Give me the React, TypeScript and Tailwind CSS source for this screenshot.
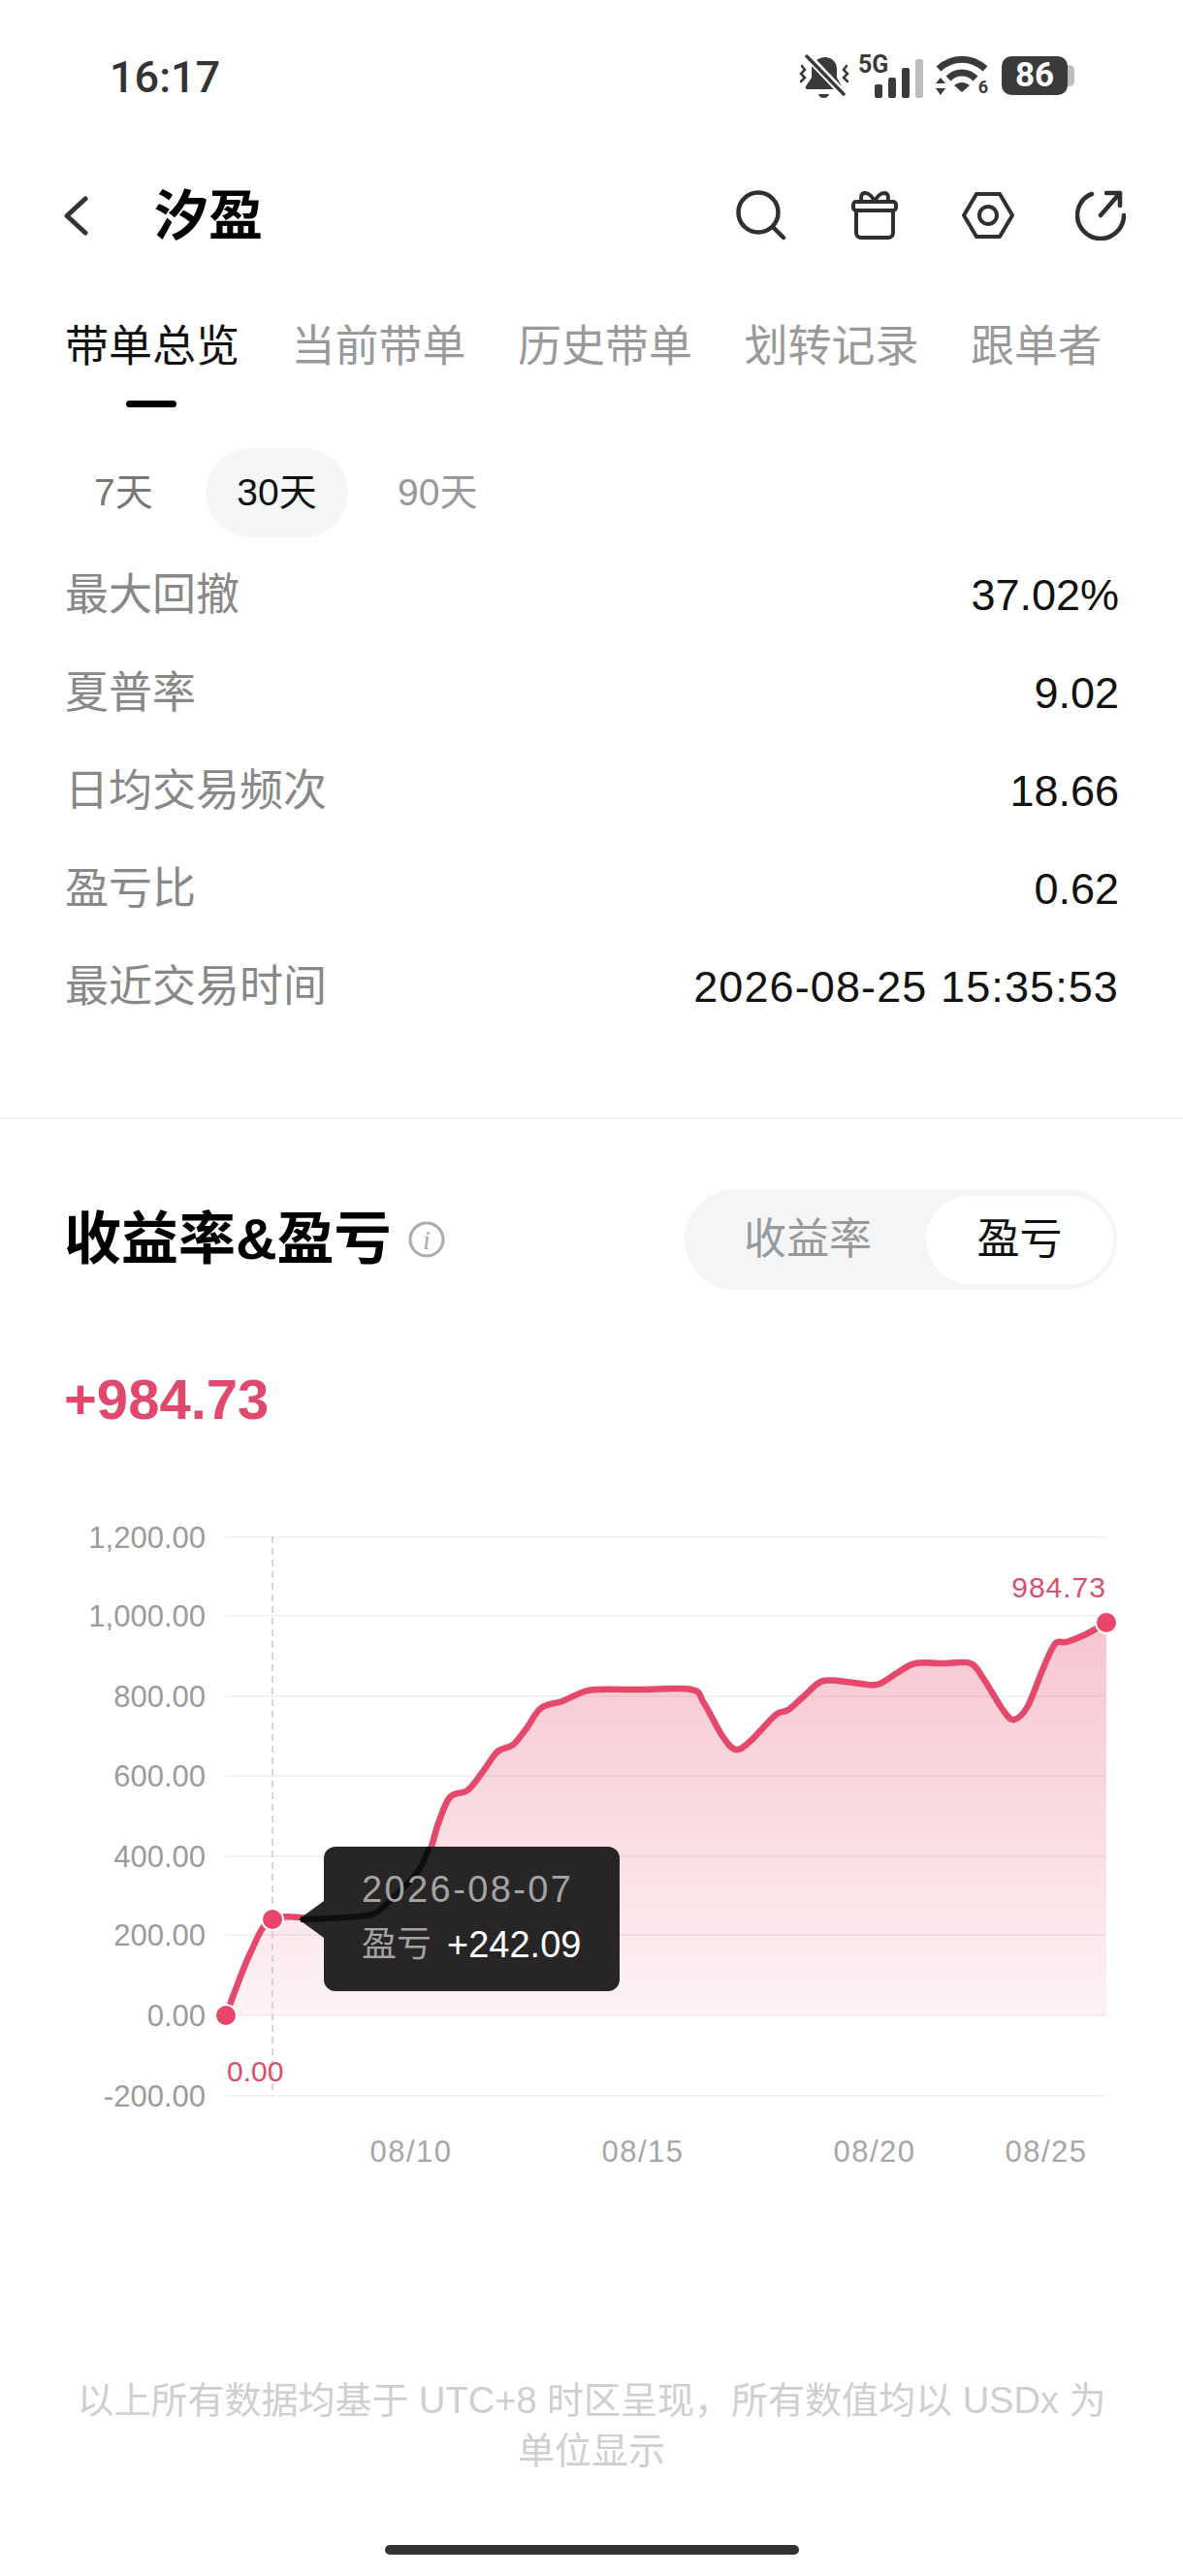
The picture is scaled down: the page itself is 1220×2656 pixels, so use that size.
import React from "react";

const TABS = ["带单总览", "当前带单", "历史带单", "划转记录", "跟单者"];

const STATS = [
  { label: "最大回撤", value: "37.02%" },
  { label: "夏普率", value: "9.02" },
  { label: "日均交易频次", value: "18.66" },
  { label: "盈亏比", value: "0.62" },
  { label: "最近交易时间", value: "2026-08-25 15:35:53" },
];

// grid lines, in page-y terms of the chart drawing
const Y_TICKS = [
  { label: "1,200.00", y: 1585 },
  { label: "1,000.00", y: 1666 },
  { label: "800.00", y: 1749 },
  { label: "600.00", y: 1831 },
  { label: "400.00", y: 1914 },
  { label: "200.00", y: 1995 },
  { label: "0.00", y: 2078 },
  { label: "-200.00", y: 2161 },
];

const X_TICKS = [
  { label: "08/10", x: 424 },
  { label: "08/15", x: 663 },
  { label: "08/20", x: 902 },
  { label: "08/25", x: 1079 },
];

const POINTS: [number, number][] = [
  [233, 2078], [258, 2014], [281, 1979], [330, 1978], [379, 1975], [405, 1957], [437, 1924],
  [452, 1880], [464, 1853], [482, 1846], [497, 1828], [513, 1806], [529, 1799], [543, 1782],
  [558, 1761], [580, 1754], [600, 1745], [615, 1742], [660, 1742], [713, 1742], [726, 1756],
  [745, 1790], [759, 1804], [774, 1795], [800, 1768], [813, 1763], [830, 1748], [849, 1733],
  [880, 1735], [904, 1737], [925, 1725], [944, 1715], [975, 1715], [1001, 1715], [1015, 1732],
  [1035, 1764], [1046, 1773], [1060, 1759], [1075, 1722], [1088, 1695], [1100, 1693],
  [1120, 1685], [1141, 1673],
];

function smoothPath(pts: [number, number][]) {
  let d = `M${pts[0][0]} ${pts[0][1]}`;
  for (let i = 0; i < pts.length - 1; i++) {
    const p0 = pts[Math.max(i - 1, 0)];
    const p1 = pts[i];
    const p2 = pts[i + 1];
    const p3 = pts[Math.min(i + 2, pts.length - 1)];
    const c1x = p1[0] + (p2[0] - p0[0]) / 6;
    const c1y = p1[1] + (p2[1] - p0[1]) / 6;
    const c2x = p2[0] - (p3[0] - p1[0]) / 6;
    const c2y = p2[1] - (p3[1] - p1[1]) / 6;
    d += ` C${c1x} ${c1y} ${c2x} ${c2y} ${p2[0]} ${p2[1]}`;
  }
  return d;
}

function BellOff() {
  return (
    <svg width="52" height="45" viewBox="0 0 52 45">
      <path d="M27 3c7 0 12 5 12 12v9l5 9c1 2 0 3-2 3H9c-2 0-3-1-2-3l6-9v-9c0-7 7-12 14-12z" fill="#3a3a3a" />
      <path d="M20 41h11c-1 3-3 4-5.500 4s-4.500-1-5.500-4z" fill="#3a3a3a" />
      <path d="M7 0l41 43" stroke="#fff" strokeWidth="8" />
      <path d="M8 2l38 39" stroke="#3a3a3a" strokeWidth="3.500" strokeLinecap="round" />
      <path d="M3 12l3 4-4 4 4 4-4 4" stroke="#3a3a3a" strokeWidth="2.500" fill="none" strokeLinecap="round" />
      <path d="M49 12l-3 4 4 4-4 4 4 4" stroke="#3a3a3a" strokeWidth="2.500" fill="none" strokeLinecap="round" />
    </svg>
  );
}

function Signal() {
  return (
    <div className="relative h-[45px] w-[67px]">
      <span className="absolute top-[-2px] left-0 font-['Roboto',sans-serif] text-[25px] leading-none font-bold text-[#3a3a3a]">
        5G
      </span>
      <svg width="67" height="45" viewBox="0 0 67 45" className="block">
        <rect x="17" y="31" width="8" height="14" rx="2" fill="#3a3a3a" />
        <rect x="31" y="24" width="8" height="21" rx="2" fill="#3a3a3a" />
        <rect x="45" y="14" width="8" height="31" rx="2" fill="#3a3a3a" />
        <rect x="59" y="5" width="8" height="40" rx="2" fill="#bdbdbd" />
      </svg>
    </div>
  );
}

function Wifi() {
  return (
    <div className="relative h-[42px] w-[54px]">
      <svg width="54" height="42" viewBox="0 0 54 42" className="block">
        <path d="M3 14C17 1 37 1 51 14" stroke="#3a3a3a" strokeWidth="7" fill="none" />
        <path d="M13 24C21 16 33 16 41 24" stroke="#3a3a3a" strokeWidth="7" fill="none" />
        <path d="M19 31c5-4 11-4 16 0l-8 7z" fill="#3a3a3a" />
        <path d="M5 23l5 6H0zM5 41l5-7H0z" fill="#3a3a3a" />
      </svg>
      <span className="absolute right-0 bottom-0 font-['Roboto',sans-serif] text-[18px] leading-none font-bold text-[#3a3a3a]">
        6
      </span>
    </div>
  );
}

function BackIcon() {
  return (
    <svg width="26" height="41" viewBox="0 0 26 41" fill="none">
      <path d="M23 3L4 20.500 23 38" stroke="#333" strokeWidth="5" strokeLinecap="round" strokeLinejoin="round" />
    </svg>
  );
}

function SearchIcon() {
  return (
    <svg width="52" height="52" viewBox="0 0 52 52" fill="none" stroke="#2f2f2f" strokeWidth="4.500" strokeLinecap="round">
      <circle cx="23" cy="23" r="20.500" />
      <path d="M38 38l11 11" />
    </svg>
  );
}

function GiftIcon() {
  return (
    <svg width="48" height="50" viewBox="0 0 48 50" fill="none" stroke="#2f2f2f" strokeWidth="4" strokeLinejoin="round" strokeLinecap="round">
      <rect x="2" y="11" width="44" height="9" rx="3" />
      <path d="M5 20v23a5 5 0 005 5h28a5 5 0 005-5V20" />
      <path d="M24 11c-2-5-6-9-10-9s-5 5-3 9M24 11c2-5 6-9 10-9s5 5 3 9" />
    </svg>
  );
}

function HexIcon() {
  return (
    <svg width="54" height="50" viewBox="0 0 54 50" fill="none" stroke="#2f2f2f" strokeWidth="4" strokeLinejoin="round">
      <path d="M15 3h24l13 22-13 22H15L2 25z" />
      <circle cx="27" cy="25" r="9" />
    </svg>
  );
}

function ShareIcon() {
  return (
    <svg width="52" height="52" viewBox="0 0 52 52" fill="none" stroke="#2f2f2f" strokeWidth="4.500" strokeLinecap="round" strokeLinejoin="round">
      <path d="M17 4C8 7 2 16 2 26c0 13 11 24 24 24s24-11 24-24" />
      <path d="M26 26L46 3M32 3h14v13" />
    </svg>
  );
}

function Chart() {
  const line = smoothPath(POINTS);
  const area = `${line} L1141 2078 L233 2078 Z`;
  return (
    <div className="relative mt-[57px] h-[720px] w-full">
      <svg width="1220" height="720" viewBox="0 1540 1220 720" className="block">
        <defs>
          <linearGradient id="areaFill" x1="0" y1="1673" x2="0" y2="2078" gradientUnits="userSpaceOnUse">
            <stop offset="0" stopColor="#e5486a" stopOpacity="0.32" />
            <stop offset="1" stopColor="#e5486a" stopOpacity="0.07" />
          </linearGradient>
        </defs>
        {Y_TICKS.map((t) => (
          <g key={t.label}>
            <line x1="233" x2="1141" y1={t.y} y2={t.y} stroke="#f3f3f3" strokeWidth="2" />
            <text
              x="212"
              y={t.y + 11}
              textAnchor="end"
              fontSize="31"
              fill="#9b9b9b"
              fontFamily="'Liberation Sans', sans-serif"
            >
              {t.label}
            </text>
          </g>
        ))}
        <path d={area} fill="url(#areaFill)" />
        <line x1="281" x2="281" y1="1584" y2="2161" stroke="#c9c9c9" strokeWidth="1.500" strokeDasharray="7 5" />
        <path d={line} fill="none" stroke="#e5486a" strokeWidth="6.500" strokeLinejoin="round" />
        <circle cx="233" cy="2078" r="11" fill="#e8466a" stroke="#fff" strokeWidth="2" />
        <circle cx="281" cy="1979" r="11" fill="#e8466a" stroke="#fff" strokeWidth="2" />
        <circle cx="1141" cy="1673" r="11" fill="#e8466a" stroke="#fff" strokeWidth="2" />
        <text x="1141" y="1647" textAnchor="end" fontSize="30" letterSpacing="1" fill="#d9506f" fontFamily="'Liberation Sans', sans-serif">
          984.73
        </text>
        <text x="234" y="2146" fontSize="30" fill="#d9506f" fontFamily="'Liberation Sans', sans-serif">
          0.00
        </text>
        {X_TICKS.map((t) => (
          <text
            key={t.label}
            x={t.x}
            y="2229"
            textAnchor="middle"
            fontSize="31"
            letterSpacing="1.500"
            fill="#a6a6a6"
            fontFamily="'Liberation Sans', sans-serif"
          >
            {t.label}
          </text>
        ))}
      </svg>
      <div className="absolute top-[364px] left-[334px] flex h-[149px] w-[305px] flex-col justify-center rounded-[12px] bg-[#272526] pb-[4px] pl-[39px]">
        <span className="absolute top-[56px] left-[-26px] h-0 w-0 border-y-[19px] border-r-[26px] border-y-transparent border-r-[#272526]" />
        {/* the chart line shows darkened through the tooltip */}
        <svg width="140" height="80" viewBox="-26 0 140 80" className="absolute top-0 left-[-26px]">
          <path d="M-24 75C10 74 30 73 45 71C55 70 62 62 71 53C85 40 96 30 103 15L109 0" fill="none" stroke="#0f0d0e" strokeWidth="6" />
        </svg>
        <div className="relative text-[38px] leading-[56px] tracking-[2.400px] text-[#a3a3a3]">2026-08-07</div>
        <div className="relative flex items-center text-[38px] leading-[58px] text-white">
          <span className="mr-[16px] text-[36px] text-[#a3a3a3]">盈亏</span>
          +242.09
        </div>
      </div>
    </div>
  );
}

export default function App() {
  return (
    <div className="flex min-h-[2656px] w-[1220px] flex-col bg-white font-['Liberation_Sans','Noto_Sans_CJK_SC',sans-serif] text-[#111]">
      <div className="flex h-[156px] items-center justify-between pr-[112px] pl-[113px]">
        <span className="pt-[4px] font-['Roboto',sans-serif] text-[45px] font-medium text-[#333]">16:17</span>
        <div className="flex items-center">
          <BellOff />
          <div className="ml-[9px]">
            <Signal />
          </div>
          <div className="ml-[13px]">
            <Wifi />
          </div>
          <div className="ml-[14px] flex items-center">
            <div className="flex h-[40px] w-[68px] items-center justify-center rounded-[10px] bg-[#3a3a3a] font-['Roboto',sans-serif] text-[35px] font-bold text-white">
              86
            </div>
            <div className="h-[22px] w-[7px] rounded-r-[5px] bg-[#bdbdbd]" />
          </div>
        </div>
      </div>

      <div className="flex h-[132px] items-center justify-between pr-[59px] pl-[65px]">
        <div className="flex items-center">
          <BackIcon />
          <span className="ml-[68px] pt-[2px] text-[56px] leading-none font-bold text-black">汐盈</span>
        </div>
        <div className="flex items-center">
          <SearchIcon />
          <div className="ml-[67px]">
            <GiftIcon />
          </div>
          <div className="ml-[66px]">
            <HexIcon />
          </div>
          <div className="ml-[63px]">
            <ShareIcon />
          </div>
        </div>
      </div>

      <div className="relative flex h-[136px] items-center gap-[53.500px] pt-[3px] pl-[67px]">
        {TABS.map((tab, i) => (
          <span key={tab} className={i === 0 ? "text-[45px] text-[#111]" : "text-[45px] text-[#999]"}>
            {tab}
          </span>
        ))}
        <span className="absolute top-[125px] left-[130px] h-[7px] w-[52px] rounded-full bg-black" />
      </div>

      <div className="mt-[38px] flex h-[92px] items-center pl-[97px] text-[39px]">
        <span className="w-[60px] text-center whitespace-nowrap text-[#777]">7天</span>
        <span className="ml-[55px] flex h-[92px] w-[147px] items-center justify-center rounded-full bg-[#f5f6f7] text-[#111]">
          30天
        </span>
        <span className="ml-[51px] text-[#999]">90天</span>
      </div>

      <div className="mt-[9px] flex flex-col pr-[66px] pl-[67px]">
        {STATS.map((row, i) => (
          <div key={row.label} className="flex h-[101px] items-center justify-between text-[45px]">
            <span className="text-[#888]">{row.label}</span>
            <span className={i === 4 ? "tracking-[1.100px] text-[#111]" : "text-[#111]"}>{row.value}</span>
          </div>
        ))}
      </div>

      <div className="mt-[84px] h-[2px] bg-[#f0f0f0]" />

      <div className="mt-[72px] flex h-[104px] items-center justify-between pr-[68px] pl-[66px]">
        <div className="flex items-center">
          <span className="text-[59px] leading-none font-bold text-black">收益率&amp;盈亏</span>
          <svg width="38" height="38" viewBox="0 0 38 38" className="ml-[17px]">
            <circle cx="19" cy="19" r="17" fill="none" stroke="#aaa" strokeWidth="3" />
            <text x="19" y="29" textAnchor="middle" fontSize="28" fontStyle="italic" fill="#aaa" fontFamily="'Liberation Serif', serif">
              i
            </text>
          </svg>
        </div>
        <div className="flex h-[104px] w-[446px] items-center justify-between rounded-full bg-[#f3f5f6] pr-[4px] pl-[61px] text-[44px]">
          <span className="text-[#999]">收益率</span>
          <span className="flex h-[91px] w-[193px] items-center justify-center rounded-full bg-white text-[#111]">
            盈亏
          </span>
        </div>
      </div>

      <div className="mt-[73px] h-[80px] pl-[66px] text-[58px] leading-[80px] font-bold text-[#e2486b]">+984.73</div>

      <Chart />

      <div className="mt-[189px] px-[60px] text-center text-[38px] leading-[52px] text-[#cfcfcf]">
        以上所有数据均基于 UTC+8 时区呈现，所有数值均以 USDx 为<br />
        单位显示
      </div>

      <div className="mx-auto mt-[71px] h-[10px] w-[427px] rounded-full bg-[#333]" />
    </div>
  );
}
